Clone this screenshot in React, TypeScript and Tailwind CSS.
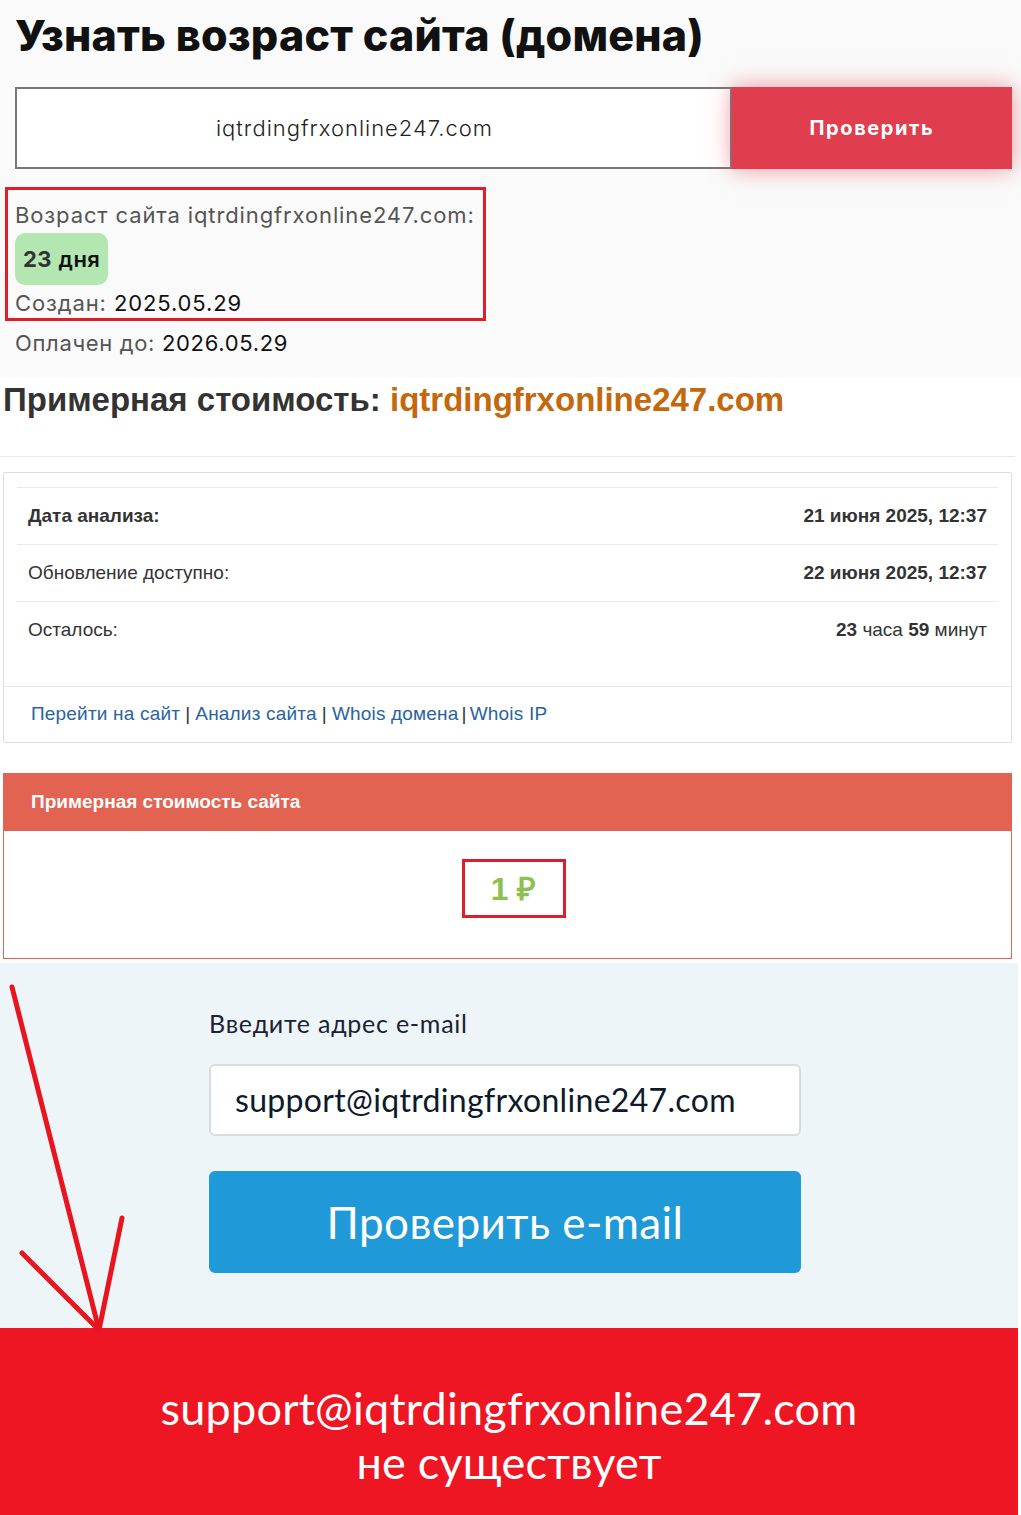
import React from 'react';

const domain = 'iqtrdingfrxonline247.com';
const email = 'support@iqtrdingfrxonline247.com';

const rows = [
  { label: 'Дата анализа:', value: <b>21 июня 2025, 12:37</b>, bold: true },
  { label: 'Обновление доступно:', value: <b>22 июня 2025, 12:37</b>, bold: false },
  {
    label: 'Осталось:',
    value: (
      <>
        <b>23</b> часа <b>59</b> минут
      </>
    ),
    bold: false,
  },
];

const Arrow = () => (
  <svg
    className="absolute left-0 top-[980px] pointer-events-none"
    width="140"
    height="360"
    viewBox="0 980 140 360"
  >
    <g stroke="#e8141e" strokeWidth="5" strokeLinecap="round" fill="none">
      <path d="M12 987 L99 1330" />
      <path d="M22 1253 L99 1330" />
      <path d="M122 1218 L99 1330" />
    </g>
  </svg>
);

const App = () => {
  return (
    <div className="relative w-[1021px] bg-white">
      {/* age check block */}
      <section className="h-[377px] bg-[#fafafa] pl-[15px] font-['Inter',sans-serif] text-[#111]">
        <h1 className="pt-[10px] text-[43px] font-extrabold leading-[50px] tracking-[0.005em]">
          Узнать возраст сайта (домена)
        </h1>
        <div className="mt-[27px] flex h-[82px]">
          <div className="flex w-[717px] shrink-0 items-center justify-center border-2 border-[#777] bg-white pr-[38px] text-[22px] font-light tracking-[0.045em] text-[#222]">
            {domain}
          </div>
          <button className="w-[280px] shrink-0 bg-[#e03e4e] text-[20px] font-bold tracking-[0.08em] text-white shadow-[0_0_22px_rgba(224,62,78,0.55)]">
            Проверить
          </button>
        </div>
        <div className="-ml-[10px] mt-[18px] h-[134px] w-[481px] border-[3px] border-[#e21d2a] pl-[7px] pt-[9px] text-[22px] tracking-[0.04em]">
          <p className="leading-[32px] text-[#555]">Возраст сайта {domain}:</p>
          <span className="mt-[2px] inline-flex h-[52px] items-center rounded-[10px] bg-[#b3e6b1] px-[8px] text-[22px] tracking-[0.02em]">
            <b className="font-bold text-[#333]">23</b>&nbsp;<span className="font-semibold">дня</span>
          </span>
          <p className="mt-[3px] leading-[30px] text-[#555]">
            Создан: <span className="text-[#111]">2025.05.29</span>
          </p>
        </div>
        <p className="mt-[7px] text-[22px] leading-[30px] tracking-[0.03em] text-[#555]">
          Оплачен до: <span className="text-[#111]">2026.05.29</span>
        </p>
      </section>

      {/* price block */}
      <section className="h-[586px] w-[1018px] bg-white pl-[3px] pr-[6px] font-['Liberation_Sans',Arial,sans-serif]">
        <h2 className="pt-[3px] text-[33px] font-bold leading-[40px] text-[#333]">
          Примерная стоимость: <span className="text-[#c4680d]">{domain}</span>
        </h2>
        <hr className="-ml-[3px] mt-[36px] w-[1015px] border-[#e8e8e8]" />
        <div className="mt-[15px] rounded-[2px] border border-[#dddddd]">
          <div className="px-[13px] pb-[28px] pt-[14px]">
            {rows.map((r, i) => (
              <div
                key={i}
                className="flex h-[57px] items-center justify-between border-t border-[#e9e9e9] px-[11px] text-[19px] text-[#333]"
              >
                <span className={r.bold ? 'font-bold' : ''}>{r.label}</span>
                <span>{r.value}</span>
              </div>
            ))}
          </div>
          <div className="flex h-[56px] items-center border-t border-[#e6e6e6] px-[27px] text-[19px] tracking-[0.01em] text-[#2a63a0]">
            Перейти на сайт <span className="mx-[5px] text-[#333]">|</span> Анализ сайта{' '}
            <span className="mx-[5px] text-[#333]">|</span> Whois домена{' '}
            <span className="mx-[3px] text-[#333]">|</span> Whois IP
          </div>
        </div>
        <div className="mt-[30px]">
          <div className="flex h-[58px] items-center bg-[#e36352] px-[28px] text-[19px] font-bold text-white">
            Примерная стоимость сайта
          </div>
          <div className="flex justify-center border border-t-0 border-[#e36352] pb-[40px] pl-[12px] pt-[28px]">
            <div className="flex h-[59px] w-[104px] items-center justify-center border-[3px] border-[#e21d2a] text-[32px] font-bold text-[#8cc152]">
              1 ₽
            </div>
          </div>
        </div>
      </section>

      {/* email check */}
      <section className="h-[365px] w-[1018px] bg-[#eef5f9] pl-[209px] pt-[45px] font-['Lato',sans-serif]">
        <p className="text-[25px] leading-[30px] tracking-[0.03em] text-[#1a2233]">Введите адрес e-mail</p>
        <div className="mt-[26px] flex h-[72px] w-[592px] items-center rounded-[6px] border-2 border-[#d9dcde] bg-white pl-[24px] text-[32px] tracking-[0.01em] text-[#0d1a2b]">
          {email}
        </div>
        <button className="mt-[35px] h-[102px] w-[592px] rounded-[6px] bg-[#1f99d7] text-[44px] tracking-[0.01em] text-white">
          Проверить e-mail
        </button>
      </section>

      {/* result */}
      <section className="h-[187px] w-[1018px] bg-[#ee1622] pt-[53px] text-center font-['Lato',sans-serif] text-[45px] leading-[54px] tracking-[0.005em] text-white">
        <p>{email}</p>
        <p>не существует</p>
      </section>

      <Arrow />
    </div>
  );
};

export default App;
